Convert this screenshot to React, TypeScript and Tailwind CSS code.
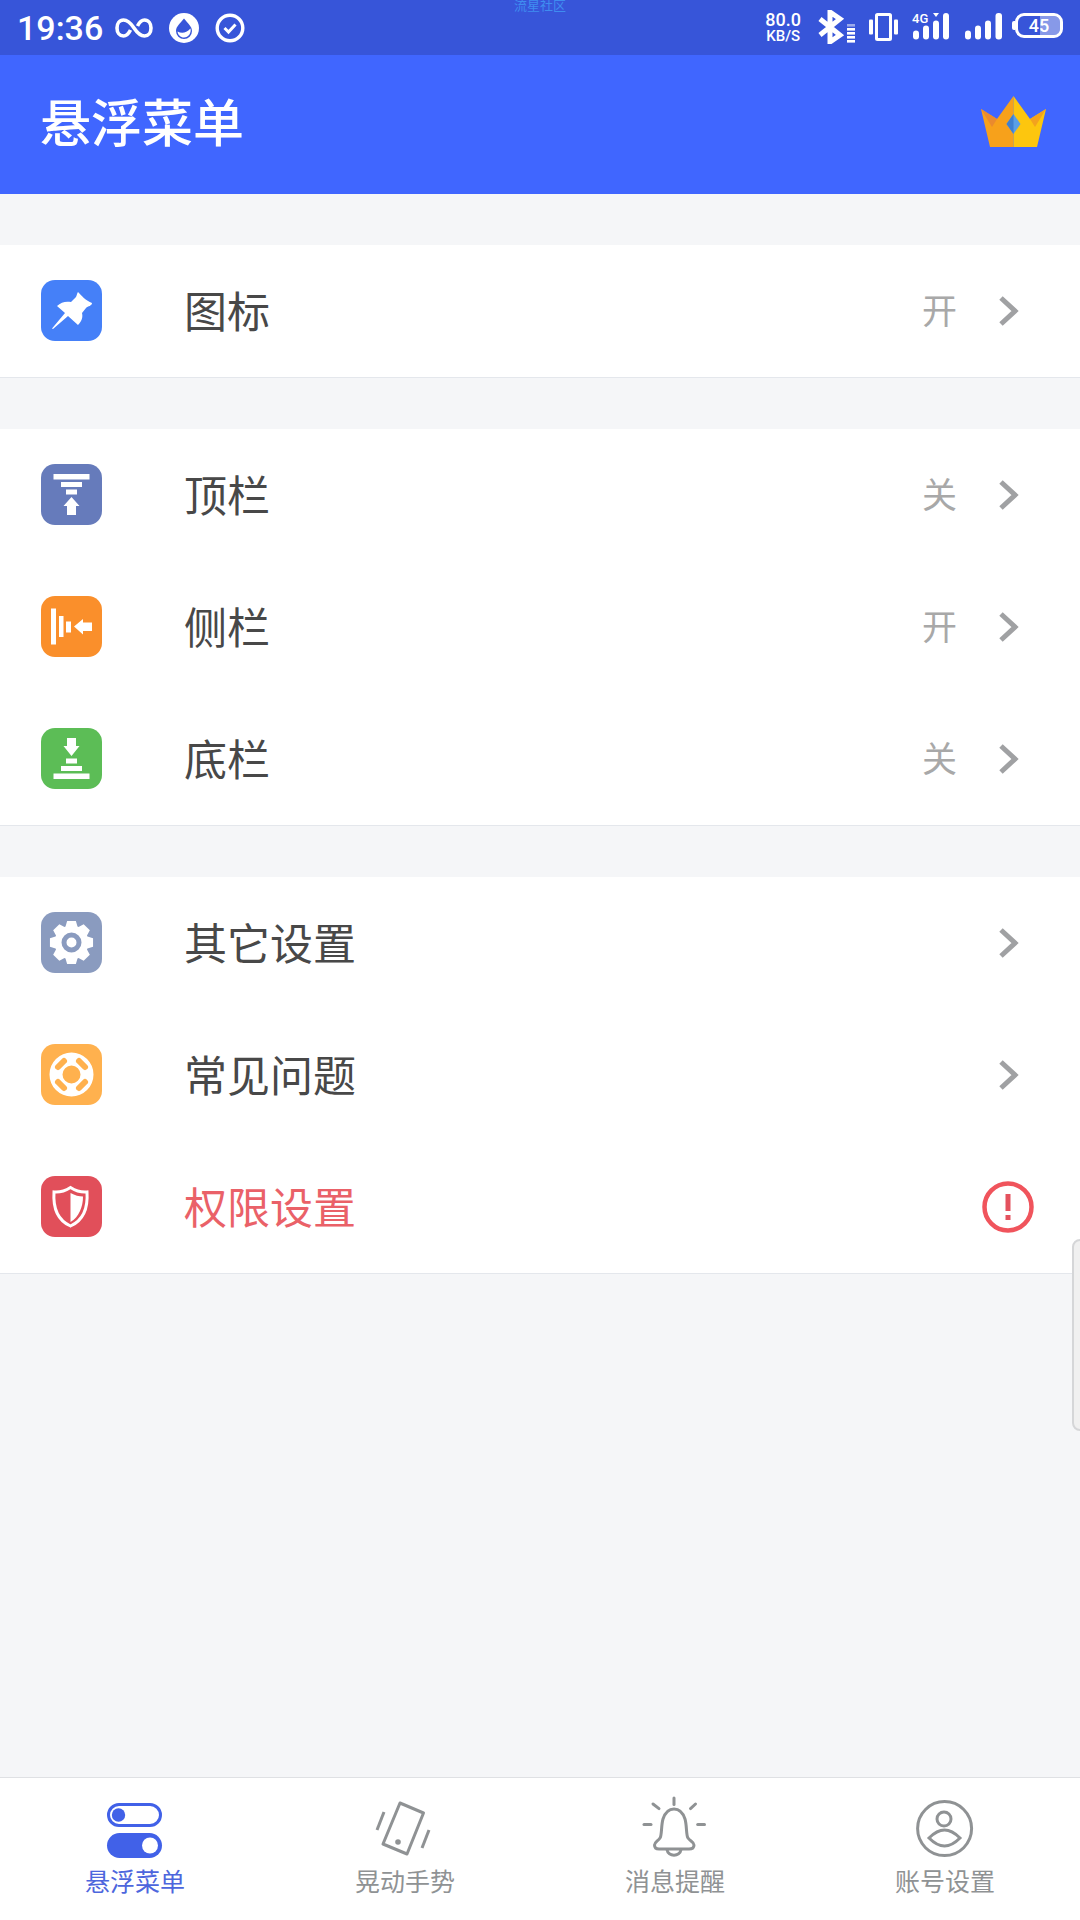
import React from "react";

const cjk = "font-['Noto_Sans_CJK_SC',sans-serif]";

function gearPath() {
  const cx = 30.5;
  const cy = 30.5;
  const pts: string[] = [];
  for (let i = 0; i < 8; i++) {
    const a = (i * Math.PI) / 4 - Math.PI / 2;
    const seq: [number, number][] = [
      [17, -0.36],
      [22, -0.2],
      [22, 0.2],
      [17, 0.36],
    ];
    for (const [r, d] of seq) {
      pts.push(`${(cx + r * Math.cos(a + d)).toFixed(2)} ${(cy + r * Math.sin(a + d)).toFixed(2)}`);
    }
  }
  return `M${pts.join(" L")} Z M30.5 20.5 A10 10 0 1 0 30.5 40.5 A10 10 0 1 0 30.5 20.5 Z M30.5 25.5 A5 5 0 1 1 30.5 35.5 A5 5 0 1 1 30.5 25.5 Z`;
}

function Chevron() {
  return (
    <svg width="24" height="34" viewBox="0 0 24 34" fill="none" className="mb-[1px]">
      <path d="M4 4 L18 17 L4 30" stroke="#a0a1a3" strokeWidth="5" />
    </svg>
  );
}

function Tile({ bg, children }: { bg: string; children: React.ReactNode }) {
  return (
    <div className={`w-[61px] h-[61px] rounded-[14px] shrink-0 mb-[2px] ${bg}`}>
      <svg width="61" height="61" viewBox="0 0 61 61" fill="white">{children}</svg>
    </div>
  );
}

const icons = {
  pin: (
    <path d="M37 12 C40 15 45 21 51 23 C51 26 47 26 45 28 L41 33 C42 37 41 41 37 45 L27 36 L12 49 L11 48.5 L24 33 L16 26 C20 22 25 21 30 22 L35 17 C36 15 36 13 37 12 Z" />
  ),
  top: (
    <>
      <rect x="12.5" y="10" width="36" height="5.5" />
      <rect x="20" y="18" width="21" height="5" />
      <rect x="25" y="25.5" width="11" height="5" />
      <path d="M30.5 33 L38.5 42 L35 42 L35 51 L26 51 L26 42 L22.5 42 Z" />
    </>
  ),
  side: (
    <>
      <rect x="10" y="12.5" width="5" height="36" />
      <rect x="18" y="20" width="4.5" height="21" />
      <rect x="25" y="25.5" width="5" height="11" />
      <path d="M33 30.5 L42 23 L42 26.5 L51 26.5 L51 35 L42 35 L42 38.5 Z" />
    </>
  ),
  bottom: (
    <>
      <path d="M26 10 L35 10 L35 18 L38.5 18 L30.5 28 L22.5 18 L26 18 Z" />
      <rect x="25" y="30.5" width="11" height="5" />
      <rect x="20" y="38" width="21" height="5" />
      <rect x="12.5" y="45.5" width="36" height="5.5" />
    </>
  ),
  gear: <path fillRule="evenodd" d={gearPath()} />,
  help: (
    <>
      <path
        fillRule="evenodd"
        d="M30.5 8.5 A22 22 0 1 0 30.5 52.5 A22 22 0 1 0 30.5 8.5 Z M30.5 21.5 A9 9 0 1 1 30.5 39.5 A9 9 0 1 1 30.5 21.5 Z"
      />
      <g stroke="#ffb14e" strokeWidth="6" strokeLinecap="round" fill="none">
        <path d="M17 23 L23 17" />
        <path d="M38 17 L44 23" />
        <path d="M17 38 L23 44" />
        <path d="M38 44 L44 38" />
      </g>
    </>
  ),
  shield: (
    <>
      <path d="M29.5 11.5 C35 15 41 16.5 46 16 C47 31 43 44 29.5 50 C16 44 12 31 13 16 C18 16.5 24 15 29.5 11.5 Z" fill="none" stroke="white" strokeWidth="3" />
      <path d="M29.5 17 C34 19.5 38 20.5 42 20.5 C42 31 38 41 29.5 46 Z" />
    </>
  ),
};

function Row({
  icon,
  bg,
  label,
  value,
  red,
}: {
  icon: React.ReactNode;
  bg: string;
  label: string;
  value?: string;
  red?: boolean;
}) {
  return (
    <div className="h-[132px] flex items-center pl-[41px] pr-[59px]">
      <Tile bg={bg}>{icon}</Tile>
      <div className={`ml-[82px] mb-[4px] flex-1 text-[43px] leading-none ${red ? "text-[#ea6168]" : "text-[#484848]"}`}>{label}</div>
      {value && <div className="text-[35px] leading-none text-[#a8a8a8] mr-[40px] mb-[5px]">{value}</div>}
      {red ? (
        <svg width="52" height="52" viewBox="0 0 52 52" className="-mr-[13px]" fill="none">
          <circle cx="26" cy="26" r="23.5" stroke="#f0545c" strokeWidth="4.5" />
          <rect x="23.5" y="13" width="5" height="17" fill="#e4525e" />
          <rect x="23.5" y="34" width="5" height="5" fill="#e4525e" />
        </svg>
      ) : (
        <Chevron />
      )}
    </div>
  );
}

function Section({ children }: { children: React.ReactNode }) {
  return <div className="bg-white border-b border-[#e4e7ec] box-content mt-[51px]">{children}</div>;
}

function Tab({ label, active, children }: { label: string; active?: boolean; children: React.ReactNode }) {
  return (
    <div className="flex-1 flex flex-col items-center pt-[23px]">
      <svg width="64" height="60" viewBox="0 0 64 60" fill="none" className="overflow-visible">{children}</svg>
      <div className={`mt-[3px] text-[25px] leading-[32px] ${active ? "text-[#4d66dd]" : "text-[#8f9294]"}`}>{label}</div>
    </div>
  );
}

function Bars() {
  return (
    <>
      <rect x="0" y="17.5" width="6" height="9" rx="3" />
      <rect x="10" y="12.5" width="6" height="14" rx="3" />
      <rect x="20" y="7.5" width="6" height="19" rx="3" />
    </>
  );
}

function StatusBar() {
  return (
    <div className="relative h-[55px] bg-[#3755d9] flex items-center pl-[17px] pr-[17px] text-white font-['Roboto',sans-serif]">
      <span className="text-[34px] leading-none font-medium">19:36</span>
      <svg width="38" height="22" viewBox="0 0 38 22" fill="none" className="ml-[12px]">
        <path d="M19 11 C15 5 12 3 8.5 3 C4.5 3 2 6.5 2 11 C2 15.5 4.5 19 8.5 19 C12 19 14 16 15.5 13 M19 11 C23 17 26 19 29.5 19 C33.5 19 36 15.5 36 11 C36 6.5 33.5 3 29.5 3 C26 3 24 6 22.5 9" stroke="white" strokeWidth="3.6" />
      </svg>
      <svg width="30" height="30" viewBox="0 0 30 30" className="ml-[16px]">
        <circle cx="15" cy="15" r="15" fill="white" />
        <path d="M15 5.5 C19 10.5 23 13.5 23 18 A8 8 0 0 1 7 18 C7 13.5 11 10.5 15 5.5 Z" fill="#3755d9" />
        <path d="M8.5 18.5 C13 21 17 20 21.5 15.5 C22.5 20 19.5 24.5 15 24.5 C11.5 24.5 9 22 8.5 18.5 Z" fill="white" />
      </svg>
      <svg width="30" height="30" viewBox="0 0 30 30" fill="none" className="ml-[16px]">
        <circle cx="15" cy="15" r="12.8" stroke="white" strokeWidth="3.4" />
        <path d="M9.5 15 L13.5 19 L20.5 11.5" stroke="white" strokeWidth="3" />
      </svg>
      <span className={`absolute left-[514px] -top-[2px] text-[13px] leading-[14px] text-[#3f8df0] ${cjk}`}>流星社区</span>
      <div className="ml-auto flex items-center">
        <div className="flex flex-col items-center font-medium mr-[17px] mb-[1px]">
          <span className="text-[18px] leading-[18px]">80.0</span>
          <span className="text-[15px] leading-[14px]">KB/S</span>
        </div>
        <svg width="38" height="34" viewBox="0 0 38 34" fill="none" className="mr-[13px] mb-[2px]">
          <path d="M2 9 L22 25 L12 32 L12 2 L22 9 L2 25" stroke="white" strokeWidth="5" />
          {[14, 18, 22, 26, 30].map((y) => (
            <rect key={y} x="29" y={y} width="8" height="2.6" fill="white" opacity={y === 14 ? 0.5 : 1} />
          ))}
        </svg>
        <svg width="29" height="28" viewBox="0 0 29 28" fill="white" className="mr-[15px] mb-[2px]">
          <rect x="7.5" y="1.5" width="14" height="25" rx="1" fill="none" stroke="white" strokeWidth="3" />
          <rect x="0" y="6.5" width="4" height="15" rx="1" />
          <rect x="25" y="6.5" width="4" height="15" rx="1" />
        </svg>
        <div className="relative w-[38px] h-[30px] mr-[14px]">
          <span className="absolute -left-[1px] -top-[1px] text-[13px] font-medium leading-[14px]">4G</span>
          <svg width="38" height="30" viewBox="0 0 38 30" fill="white">
            <Bars />
            <path d="M20 0 L26 0 L23 4 Z" />
            <rect x="30" y="0" width="6" height="26.5" rx="3" />
          </svg>
        </div>
        <svg width="38" height="30" viewBox="0 0 38 30" fill="white" className="mr-[12px]">
          <Bars />
          <rect x="30.5" y="0" width="6.5" height="26.5" rx="3" />
        </svg>
        <div className="relative mb-[4px]">
          <div className="absolute -left-[3px] top-[8px] w-[3px] h-[9px] rounded-l-[2px] bg-white" />
          <div className="relative w-[48px] h-[25px] rounded-[9px] border-[3px] border-white overflow-hidden flex items-center justify-center">
            <div className="absolute right-0 top-0 bottom-0 w-[20px] bg-white/40" />
            <span className="relative text-[18px] leading-none font-medium">45</span>
          </div>
        </div>
      </div>
    </div>
  );
}

export default function App() {
  return (
    <div className={`relative w-[1080px] h-[1920px] bg-[#f5f6f8] flex flex-col overflow-hidden ${cjk}`}>
      <StatusBar />
      <div className="h-[139px] bg-[#4066ff] flex items-center justify-between pl-[40px] pr-[34px]">
        <div className="text-[51px] leading-none font-medium text-white mb-[8px]">悬浮菜单</div>
        <svg width="65" height="51" viewBox="0 0 65 51" className="mb-[6px]">
          <path d="M32.5 0 L16 23 L0 13 L9 51 L32.5 51 Z" fill="#f7a11b" />
          <path d="M32.5 0 L49 23 L65 13 L56 51 L32.5 51 Z" fill="#fdc60e" />
          <path d="M0 13 L16 23 L11 31 Z" fill="#ea8a2e" />
          <path d="M65 13 L49 23 L54 31 Z" fill="#f3a21e" />
          <path d="M32.5 18 L39.5 28 L32.5 38 L25.5 28 Z" fill="#5a9fe6" />
          <path d="M32.5 18 L25.5 28 L32.5 38 Z" fill="#3f7fd0" />
        </svg>
      </div>

      <Section>
        <Row icon={icons.pin} bg="bg-[#4580f8]" label="图标" value="开" />
      </Section>
      <Section>
        <Row icon={icons.top} bg="bg-[#667bbb]" label="顶栏" value="关" />
        <Row icon={icons.side} bg="bg-[#fa8f2b]" label="侧栏" value="开" />
        <Row icon={icons.bottom} bg="bg-[#5cbd56]" label="底栏" value="关" />
      </Section>
      <Section>
        <Row icon={icons.gear} bg="bg-[#8a9bbf]" label="其它设置" />
        <Row icon={icons.help} bg="bg-[#ffb14e]" label="常见问题" />
        <Row icon={icons.shield} bg="bg-[#e14f5a]" label="权限设置" red />
      </Section>

      <div className="flex-1" />

      <div className="h-[143px] bg-white border-t border-[#dfe1e4] flex">
        <Tab label="悬浮菜单" active>
          <rect x="5.5" y="3.5" width="52" height="21" rx="10.5" stroke="#4161e8" strokeWidth="3" />
          <circle cx="15.5" cy="14" r="6.7" fill="#4161e8" />
          <rect x="4" y="32" width="55" height="25" rx="12.5" fill="#4161e8" />
          <circle cx="47" cy="44.5" r="8" fill="white" />
        </Tab>
        <Tab label="晃动手势">
          <g stroke="#8f9294" strokeWidth="3" strokeLinejoin="round">
            <path d="M27 2 L50.5 12 L34 53 L10 43 Z" />
            <path d="M11 11 L4 29" />
            <path d="M56 29 L49 47" />
          </g>
          <circle cx="25" cy="41" r="2.8" fill="#8f9294" />
        </Tab>
        <Tab label="消息提醒">
          <g stroke="#8f9294" strokeWidth="3" strokeLinecap="round">
            <path d="M31 -3 L31 3.5" />
            <path d="M10 3 L16 7.6" />
            <path d="M52.5 3 L47.5 7.6" />
            <path d="M1 23.5 L8 23.5" />
            <path d="M54.7 23.5 L61.5 23.5" />
            <path d="M31 8 C37 8 40 12 42 18 C44 25 43 34 45 37 C47 40 51 41 51 44 C51 47 49 48 46 48 L16 48 C13 48 11.5 47 11.5 44 C11.5 41 15 40 17 37 C19 34 18 25 20 18 C22 12 25 8 31 8 Z" />
            <path d="M24 48.5 C25 56 37 56 38 48.5" />
          </g>
        </Tab>
        <Tab label="账号设置">
          <g stroke="#8f9294" strokeWidth="3">
            <circle cx="31.6" cy="27.6" r="27" />
            <circle cx="31" cy="18" r="7" />
            <path d="M16 37 C22 31 27 29 31.5 29 C36 29 41 31 47 37 C41 43 36 45 31.5 45 C27 45 22 43 16 37 Z" />
          </g>
        </Tab>
      </div>

      <div className="absolute left-[1072px] top-[1239px] w-[12px] h-[192px] rounded-l-[8px] border-2 border-[#d5d6d8] bg-[#f0f0f0]" />
    </div>
  );
}
